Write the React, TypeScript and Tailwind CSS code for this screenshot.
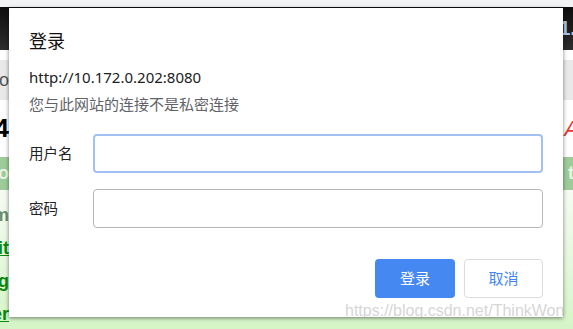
import React from "react";

const cjk = { fontFamily: '"Noto Sans", "Noto Sans CJK SC", sans-serif' };

function EdgeText({ text, className }: { text: string; className?: string }) {
  return (
    <div className="w-[9px] overflow-hidden flex justify-end shrink-0">
      <span className={"whitespace-nowrap " + (className ?? "")}>{text}</span>
    </div>
  );
}

export default function App() {
  return (
    <div
      className="relative w-[573px] h-[329px] overflow-hidden bg-white"
      style={{ fontFamily: '"Liberation Sans", Arial, sans-serif' }}
    >
      {/* Background page */}
      <div className="flex flex-col h-full">
        <div className="h-[7px] bg-[#f1f3f4]" />
        <div className="h-[43px] bg-gradient-to-b from-[#0e0e0e] to-[#2e2e2e] flex justify-between items-center">
          <div />
          <span className="text-[20px] font-bold text-[#a9c8ee] whitespace-nowrap mr-[-14px] mt-[-2px]">1.4</span>
        </div>
        <div className="h-[10px] bg-white" />
        <div className="h-[40px] bg-[#e9e9e9] flex items-center justify-between">
          <EdgeText text="Disco" className="text-[18px] text-[#555]" />
        </div>
        <div className="h-[57px] bg-white flex items-center justify-between">
          <EdgeText text="v1.4" className="text-[26px] font-bold text-black" />
          <span className="text-[22px] italic text-[#e53935] mr-[-6px]">A</span>
        </div>
        <div className="h-[33px] bg-[#9dcc99] flex items-center justify-between">
          <EdgeText text="Intro" className="text-[18px] font-bold text-[#e8f5e4]" />
          <span className="text-[18px] font-bold text-[#e8f5e4] mr-[-6px]">ti</span>
        </div>
        <div className="flex-1 bg-gradient-to-b from-[#f6fbf3] to-[#d4f5c6] flex flex-col pt-[12px] gap-[6px]">
          <EdgeText text="Sum" className="text-[18px] text-[#6b8f6b] font-bold" />
          <EdgeText text="Edit" className="text-[18px] font-bold text-[#0a8a0a] underline" />
          <EdgeText text="Logg" className="text-[18px] font-bold text-[#0a8a0a] underline" />
          <EdgeText text="Over" className="text-[18px] font-bold text-[#0a8a0a] underline" />
        </div>
      </div>

      {/* Dialog */}
      <div
        className="absolute left-[9px] top-[8px] w-[554px] h-[309px] bg-white shadow-[0_1px_4px_rgba(0,0,0,0.5)] overflow-hidden flex flex-col pt-[21px] px-[20px]"
        style={cjk}
      >
        <div className="text-[18px] leading-[24px] text-[#111]">登录</div>
        <div className="mt-[13px] text-[15px] leading-[22px] text-[#202124]">http://10.172.0.202:8080</div>
        <div className="mt-[5px] text-[15px] leading-[22px] text-[#5f6368]">
          您与此网站的连接不是私密连接
        </div>
        <div className="mt-[19px] flex items-center">
          <div className="w-[64px] text-[14.5px] text-[#202124]">用户名</div>
          <div className="flex-1 h-[39px] rounded-[4px] border-2 border-[#a3c0f5]" />
        </div>
        <div className="mt-[16px] flex items-center">
          <div className="w-[64px] text-[14.5px] text-[#202124]">密码</div>
          <div className="flex-1 h-[39px] rounded-[4px] border border-[#b6b6b6]" />
        </div>
        <div className="mt-[31px] flex justify-end gap-[9px]">
          <div className="w-[80px] h-[39px] rounded-[4px] bg-[#4688f1] text-white text-[15px] flex items-center justify-center">
            登录
          </div>
          <div className="w-[79px] h-[39px] rounded-[4px] border border-[#dadce0] bg-white text-[#4285f4] text-[15px] flex items-center justify-center">
            取消
          </div>
        </div>
        <div
          className="absolute left-[336px] top-[293px] text-[16px] leading-[20px] text-[#d6d6d6] whitespace-nowrap"
          style={{ fontFamily: '"Liberation Sans", Arial, sans-serif', textShadow: "0 0 1px #fff" }}
        >
          https://blog.csdn.net/ThinkWon
        </div>
      </div>
    </div>
  );
}
